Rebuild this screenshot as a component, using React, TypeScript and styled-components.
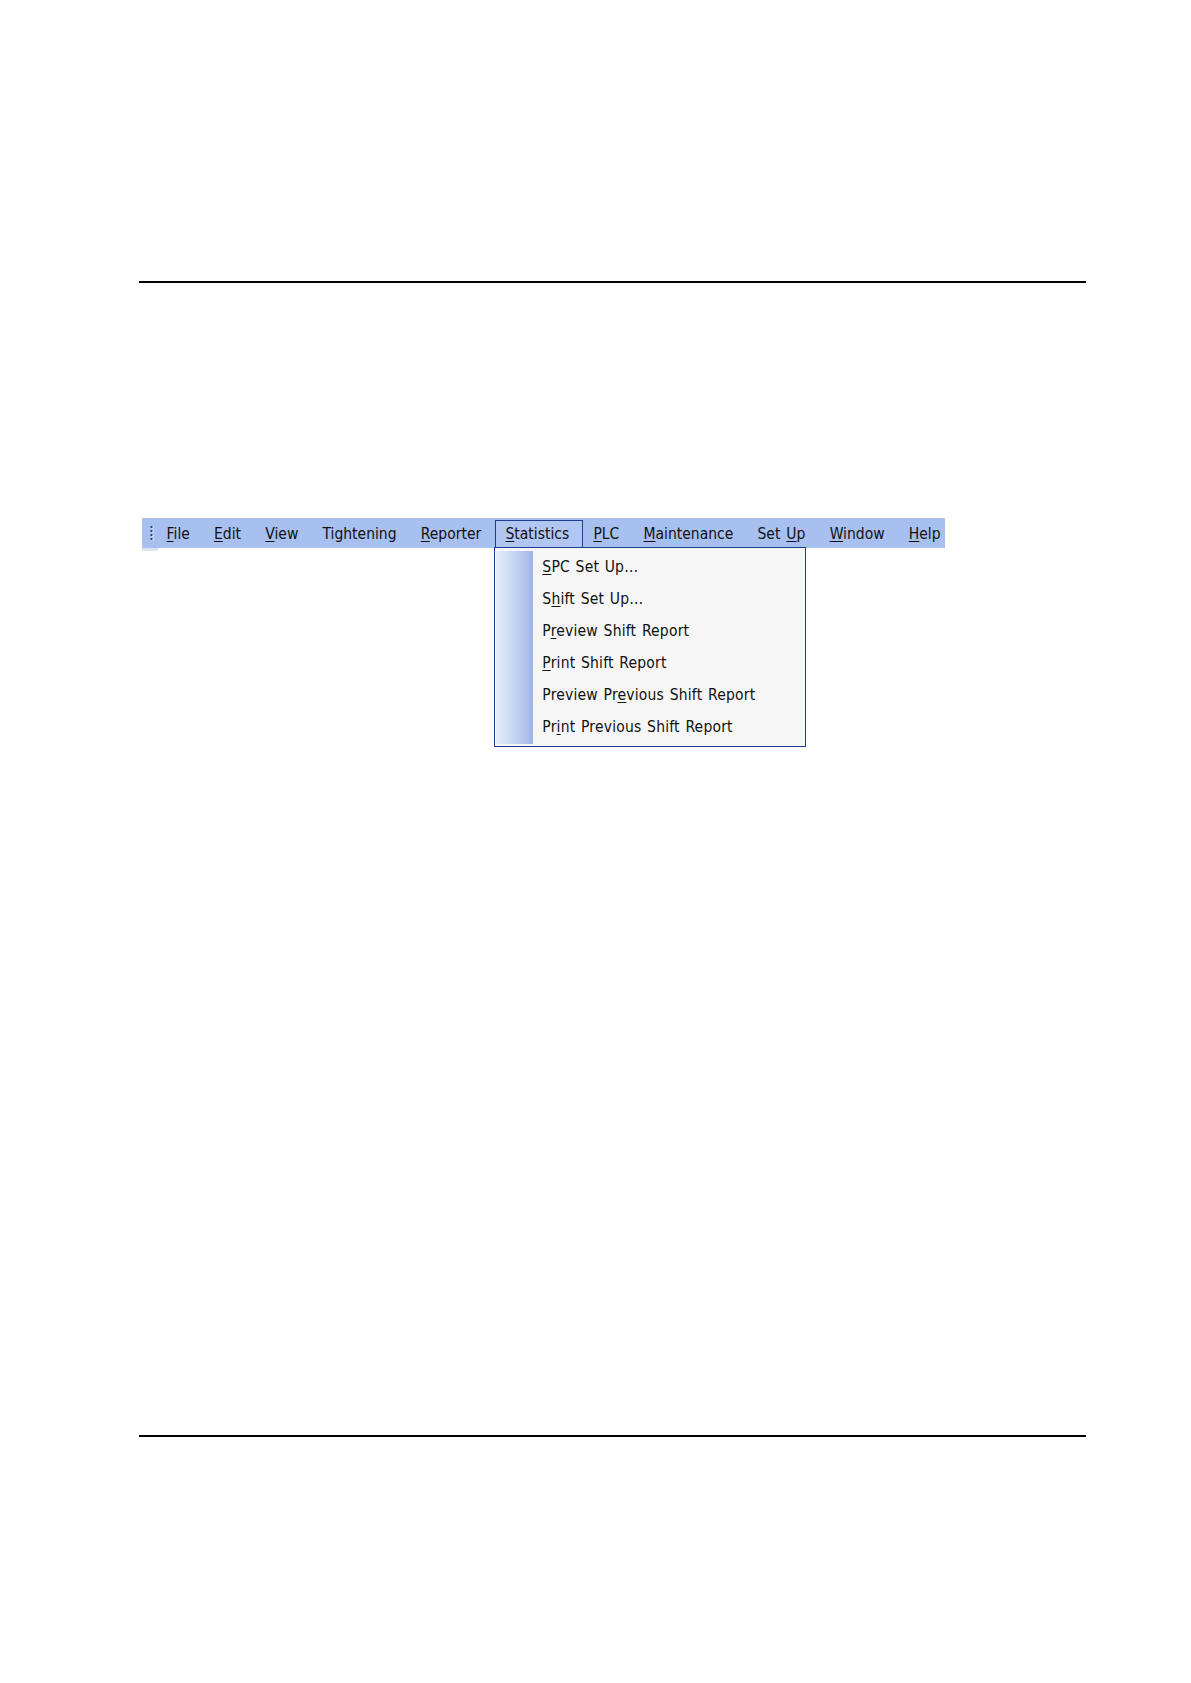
import styled, { createGlobalStyle } from "styled-components";

const GlobalStyle = createGlobalStyle`
  html, body {
    margin: 0;
    padding: 0;
    background: #ffffff;
  }
  body {
    font-family: "DejaVu Sans Condensed", "DejaVu Sans", sans-serif;
  }
`;

type Label = { before: string; key?: string; after: string };

const menuItems: Label[] = [
  { before: "", key: "F", after: "ile" },
  { before: "", key: "E", after: "dit" },
  { before: "", key: "V", after: "iew" },
  { before: "Tightening", after: "" },
  { before: "", key: "R", after: "eporter" },
  { before: "", key: "S", after: "tatistics" },
  { before: "", key: "P", after: "LC" },
  { before: "", key: "M", after: "aintenance" },
  { before: "Set ", key: "U", after: "p" },
  { before: "", key: "W", after: "indow" },
  { before: "", key: "H", after: "elp" },
];

const statsItems: Label[] = [
  { before: "", key: "S", after: "PC Set Up…" },
  { before: "S", key: "h", after: "ift Set Up…" },
  { before: "P", key: "r", after: "eview Shift Report" },
  { before: "", key: "P", after: "rint Shift Report" },
  { before: "Preview Pr", key: "e", after: "vious Shift Report" },
  { before: "Pr", key: "i", after: "nt Previous Shift Report" },
];

const OPEN_INDEX = 5;

const Text = ({ label }: { label: Label }) => (
  <span>
    {label.before}
    {label.key && <Mnemonic>{label.key}</Mnemonic>}
    {label.after}
  </span>
);

const App = () => {
  return (
    <>
      <GlobalStyle />
      <StPage>
        <StRule />
        <StBody>
          <StMenuBar>
            <StGrip>
              <svg width="4" height="16" viewBox="0 0 4 16">
                {[1, 5, 9, 13].map((y) => (
                  <g key={y}>
                    <rect x="1.5" y={y + 0.5} width="2" height="2" fill="#ffffff" />
                    <rect x="0.5" y={y} width="2" height="2" fill="#27407c" />
                  </g>
                ))}
              </svg>
            </StGrip>
            {menuItems.map((item, i) => (
              <StMenuItem key={i} $open={i === OPEN_INDEX}>
                <Text label={item} />
                {i === OPEN_INDEX && (
                  <StDropdown>
                    <StIconStrip />
                    <StList>
                      {statsItems.map((sub, j) => (
                        <StDropItem key={j}>
                          <Text label={sub} />
                        </StDropItem>
                      ))}
                    </StList>
                  </StDropdown>
                )}
              </StMenuItem>
            ))}
          </StMenuBar>
          <StBarShadow />
        </StBody>
        <StRule />
      </StPage>
    </>
  );
};

export default App;

const StPage = styled.div`
  width: 1191px;
  height: 1683px;
  box-sizing: border-box;
  padding: 281px 105px 0 139px;
`;

const StRule = styled.div`
  width: 947px;
  height: 2px;
  background-color: #000000;
`;

const StBody = styled.div`
  height: 1152px;
  padding: 235px 0 0 3px;
  box-sizing: border-box;
`;

const StMenuBar = styled.div`
  display: flex;
  align-items: stretch;
  width: 803px;
  height: 30px;
  background-color: #a8c0f0;
  font-size: 15.5px;
  word-spacing: 1.5px;
  color: #111111;
`;

const StBarShadow = styled.div`
  width: 16px;
  height: 3px;
  background-color: #dde3ee;
`;

const StGrip = styled.div`
  display: flex;
  align-items: center;
  padding: 0 0 0 8px;
`;

const StMenuItem = styled.div<{ $open?: boolean }>`
  position: relative;
  display: flex;
  align-items: center;
  box-sizing: border-box;
  padding: ${(p) => (p.$open ? "0 12.6px 0 9.6px" : "0 10.6px 0 11.6px")};
  margin: ${(p) => (p.$open ? "1.5px -2px 0 2px" : "0")};
  white-space: nowrap;
  border: 1.5px solid ${(p) => (p.$open ? "#1f3e92" : "transparent")};
  border-bottom: none;
  background-color: ${(p) => (p.$open ? "#b1c6f1" : "transparent")};
  z-index: ${(p) => (p.$open ? 2 : "auto")};
`;

const Mnemonic = styled.span`
  text-decoration: underline;
  text-underline-offset: 2px;
  text-decoration-thickness: 1px;
`;

const StDropdown = styled.div`
  position: absolute;
  top: calc(100% - 1.5px);
  left: -1.5px;
  width: 312px;
  height: 200px;
  box-sizing: border-box;
  display: flex;
  padding: 3px 0 2px 1px;
  border: 1.5px solid #1f3e92;
  background-color: #f6f6f6;
  z-index: -1;
`;

const StIconStrip = styled.div`
  width: 37px;
  flex-shrink: 0;
  background: linear-gradient(to right, #e6edfb 0%, #c9d7f5 45%, #9fb5e6 100%);
`;

const StList = styled.div`
  display: flex;
  flex-direction: column;
  padding-left: 9px;
`;

const StDropItem = styled.div`
  display: flex;
  align-items: center;
  height: 32.4px;
  word-spacing: 1px;
  letter-spacing: 0.2px;
  color: #111111;
`;
